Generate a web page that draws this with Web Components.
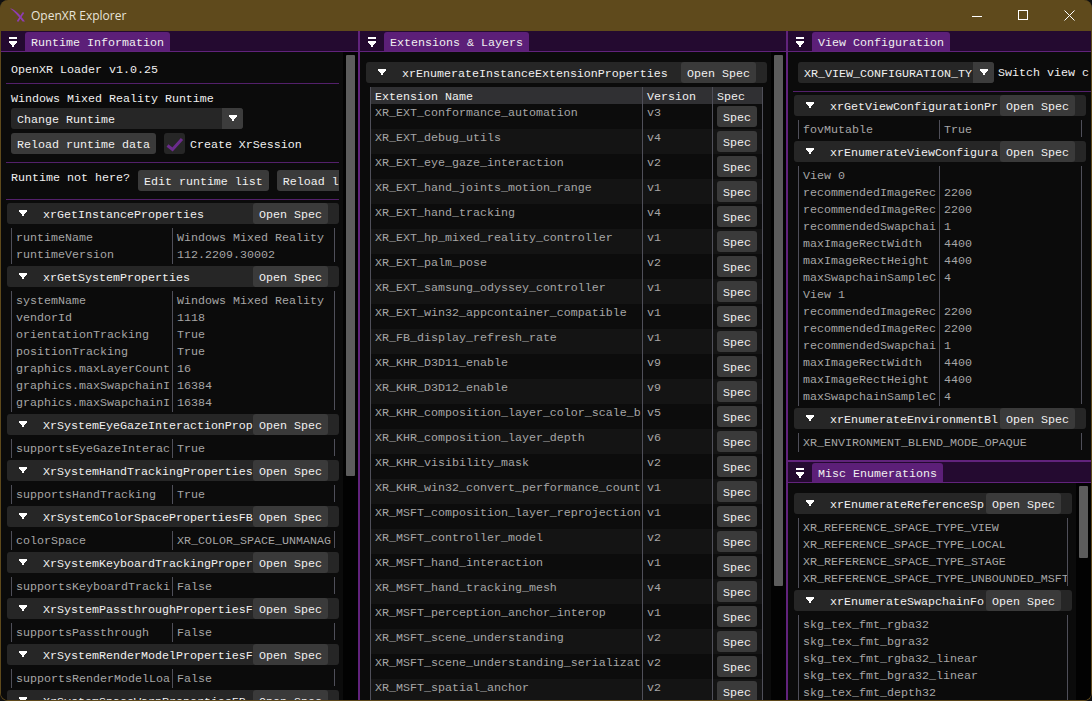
<!DOCTYPE html>
<html>
<head>
<meta charset="utf-8">
<title>OpenXR Explorer</title>
<style>
  html, body { margin: 0; height: 100%; background: #111; overflow: hidden; }
  body { font: 11.667px/17px "Liberation Mono", monospace; color: #f0f0f0; }
</style>
</head>
<body>
<xr-window>
  <xr-panel slot="left" label="Runtime Information" thumb="421" style="height:100%">
    <xr-text style="margin-top:9px">OpenXR Loader v1.0.25</xr-text>
    <xr-sep style="margin-top:5px"></xr-sep>
    <xr-text style="margin-top:6px">Windows Mixed Reality Runtime</xr-text>
    <xr-combo width="232" style="margin:1px 0 0 5px">Change Runtime</xr-combo>
    <xr-line style="margin-top:4px">
      <xr-button>Reload runtime data</xr-button>
      <xr-check>Create XrSession</xr-check>
    </xr-line>
    <xr-sep style="margin-top:8px"></xr-sep>
    <xr-line style="margin-top:7px">
      <span style="line-height:16px;flex:none">Runtime not here?</span>
      <xr-button>Edit runtime list</xr-button>
      <xr-button style="width:88px">Reload l</xr-button>
    </xr-line>
    <xr-sep style="margin:8px 0 3px"></xr-sep>

    <div style="--c1:161px;--c2:162px">
      <xr-section label="xrGetInstanceProperties">
        <xr-row name="runtimeName" value="Windows Mixed Reality"></xr-row>
        <xr-row name="runtimeVersion" value="112.2209.30002"></xr-row>
      </xr-section>
      <xr-section label="xrGetSystemProperties">
        <xr-row name="systemName" value="Windows Mixed Reality"></xr-row>
        <xr-row name="vendorId" value="1118"></xr-row>
        <xr-row name="orientationTracking" value="True"></xr-row>
        <xr-row name="positionTracking" value="True"></xr-row>
        <xr-row name="graphics.maxLayerCount" value="16"></xr-row>
        <xr-row name="graphics.maxSwapchainI" value="16384"></xr-row>
        <xr-row name="graphics.maxSwapchainI" value="16384"></xr-row>
      </xr-section>
      <xr-section label="XrSystemEyeGazeInteractionProp">
        <xr-row name="supportsEyeGazeInterac" value="True"></xr-row>
      </xr-section>
      <xr-section label="XrSystemHandTrackingProperties">
        <xr-row name="supportsHandTracking" value="True"></xr-row>
      </xr-section>
      <xr-section label="XrSystemColorSpacePropertiesFB">
        <xr-row name="colorSpace" value="XR_COLOR_SPACE_UNMANAG"></xr-row>
      </xr-section>
      <xr-section label="XrSystemKeyboardTrackingProper">
        <xr-row name="supportsKeyboardTracki" value="False"></xr-row>
      </xr-section>
      <xr-section label="XrSystemPassthroughPropertiesF">
        <xr-row name="supportsPassthrough" value="False"></xr-row>
      </xr-section>
      <xr-section label="XrSystemRenderModelPropertiesF">
        <xr-row name="supportsRenderModelLoa" value="False"></xr-row>
      </xr-section>
      <xr-section label="XrSystemSpaceWarpPropertiesFB"></xr-section>
    </div>
  </xr-panel>

  <xr-panel slot="middle" label="Extensions &amp; Layers" thumb="531" style="height:100%">
    <div style="height:10px"></div>
    <xr-section label="xrEnumerateInstanceExtensionProperties">
      <xr-ext head name="Extension Name" ver="Version"></xr-ext>
      <xr-ext name="XR_EXT_conformance_automation" ver="v3"></xr-ext>
      <xr-ext name="XR_EXT_debug_utils" ver="v4"></xr-ext>
      <xr-ext name="XR_EXT_eye_gaze_interaction" ver="v2"></xr-ext>
      <xr-ext name="XR_EXT_hand_joints_motion_range" ver="v1"></xr-ext>
      <xr-ext name="XR_EXT_hand_tracking" ver="v4"></xr-ext>
      <xr-ext name="XR_EXT_hp_mixed_reality_controller" ver="v1"></xr-ext>
      <xr-ext name="XR_EXT_palm_pose" ver="v2"></xr-ext>
      <xr-ext name="XR_EXT_samsung_odyssey_controller" ver="v1"></xr-ext>
      <xr-ext name="XR_EXT_win32_appcontainer_compatible" ver="v1"></xr-ext>
      <xr-ext name="XR_FB_display_refresh_rate" ver="v1"></xr-ext>
      <xr-ext name="XR_KHR_D3D11_enable" ver="v9"></xr-ext>
      <xr-ext name="XR_KHR_D3D12_enable" ver="v9"></xr-ext>
      <xr-ext name="XR_KHR_composition_layer_color_scale_b" ver="v5"></xr-ext>
      <xr-ext name="XR_KHR_composition_layer_depth" ver="v6"></xr-ext>
      <xr-ext name="XR_KHR_visibility_mask" ver="v2"></xr-ext>
      <xr-ext name="XR_KHR_win32_convert_performance_count" ver="v1"></xr-ext>
      <xr-ext name="XR_MSFT_composition_layer_reprojection" ver="v1"></xr-ext>
      <xr-ext name="XR_MSFT_controller_model" ver="v2"></xr-ext>
      <xr-ext name="XR_MSFT_hand_interaction" ver="v1"></xr-ext>
      <xr-ext name="XR_MSFT_hand_tracking_mesh" ver="v4"></xr-ext>
      <xr-ext name="XR_MSFT_perception_anchor_interop" ver="v1"></xr-ext>
      <xr-ext name="XR_MSFT_scene_understanding" ver="v2"></xr-ext>
      <xr-ext name="XR_MSFT_scene_understanding_serializat" ver="v2"></xr-ext>
      <xr-ext name="XR_MSFT_spatial_anchor" ver="v2"></xr-ext>
    </xr-section>
  </xr-panel>

  <xr-panel slot="right-top" label="View Configuration" style="height:429px;--section-end:5px;--c1:141px;--c2:142px">
    <xr-line style="margin-top:10px;gap:4px">
      <xr-combo width="196" style="flex:none">XR_VIEW_CONFIGURATION_TY</xr-combo>
      <span style="flex:none;height:21px;line-height:23px">Switch view c</span>
    </xr-line>
    <xr-sep style="margin:8px 0 3px"></xr-sep>
    <xr-section label="xrGetViewConfigurationPr">
      <xr-row name="fovMutable" value="True"></xr-row>
    </xr-section>
    <xr-section label="xrEnumerateViewConfigura">
      <xr-row name="View 0"></xr-row>
      <xr-row name="recommendedImageRec" value="2200"></xr-row>
      <xr-row name="recommendedImageRec" value="2200"></xr-row>
      <xr-row name="recommendedSwapchai" value="1"></xr-row>
      <xr-row name="maxImageRectWidth" value="4400"></xr-row>
      <xr-row name="maxImageRectHeight" value="4400"></xr-row>
      <xr-row name="maxSwapchainSampleC" value="4"></xr-row>
      <xr-row name="View 1"></xr-row>
      <xr-row name="recommendedImageRec" value="2200"></xr-row>
      <xr-row name="recommendedImageRec" value="2200"></xr-row>
      <xr-row name="recommendedSwapchai" value="1"></xr-row>
      <xr-row name="maxImageRectWidth" value="4400"></xr-row>
      <xr-row name="maxImageRectHeight" value="4400"></xr-row>
      <xr-row name="maxSwapchainSampleC" value="4"></xr-row>
    </xr-section>
    <xr-section label="xrEnumerateEnvironmentBl">
      <xr-row wide name="XR_ENVIRONMENT_BLEND_MODE_OPAQUE" style="--c1:283px"></xr-row>
    </xr-section>
  </xr-panel>

  <xr-panel slot="right-bottom" label="Misc Enumerations" thumb="72" style="height:238px;--c1:269px">
    <div style="height:10px"></div>
    <xr-section label="xrEnumerateReferenceSp">
      <xr-row wide name="XR_REFERENCE_SPACE_TYPE_VIEW"></xr-row>
      <xr-row wide name="XR_REFERENCE_SPACE_TYPE_LOCAL"></xr-row>
      <xr-row wide name="XR_REFERENCE_SPACE_TYPE_STAGE"></xr-row>
      <xr-row wide name="XR_REFERENCE_SPACE_TYPE_UNBOUNDED_MSFT"></xr-row>
    </xr-section>
    <xr-section label="xrEnumerateSwapchainFo">
      <xr-row wide name="skg_tex_fmt_rgba32"></xr-row>
      <xr-row wide name="skg_tex_fmt_bgra32"></xr-row>
      <xr-row wide name="skg_tex_fmt_rgba32_linear"></xr-row>
      <xr-row wide name="skg_tex_fmt_bgra32_linear"></xr-row>
      <xr-row wide name="skg_tex_fmt_depth32"></xr-row>
    </xr-section>
  </xr-panel>
</xr-window>

<script>
const arrow = `<svg width="8" height="7" viewBox="0 0 8 7" shape-rendering="crispEdges" fill="#fff"><path d="M0 0H8V2H7V3H6V4H5V6H3V4H2V3H1V2H0Z"/></svg>`;

// Every element fills its shadow root the same way
class XrBase extends HTMLElement {
  render(html) {
    this.attachShadow({ mode: "open" }).innerHTML = html.trim();
  }
}

// Outer frame: title bar and the docked panels
class XrWindow extends XrBase {
  constructor() {
    super();
    this.render(`
      <style>
        :host { display: flex; flex-direction: column; width: 1092px; height: 701px; box-sizing: border-box;
          background: #5f4a1c; border: 1px solid #5f4a1c; border-top: 0; border-radius: 8px; overflow: hidden; }
        .title { display: flex; align-items: center; flex: none; height: 31px; color: #e8e4da;
          font: 12px/31px "Open Sans", "Noto Sans", sans-serif; margin-right: -1px; }
        .logo { margin: 0 5px 0 9px; }
        .ctl { display: flex; margin-left: auto; }
        .ctl div { width: 46px; height: 31px; display: flex; align-items: center; justify-content: center; }
        .dock { display: flex; flex: 1; min-height: 0; background: #000; }
        .div { flex: none; width: 2px; background: #61237c; }
        .left { flex: none; width: 357px; min-width: 0; }
        .mid { flex: none; width: 426px; min-width: 0; }
        .right { flex: 1; min-width: 0; display: flex; flex-direction: column; }
        .hdiv { flex: none; height: 2px; background: #61237c; }
      </style>
      <div class="title">
        <svg class="logo" width="16" height="15" viewBox="0 0 16 15">
          <path fill="#8f3db0" d="M0 .3C5 1.5 9.5 6 15 13.5H12.6C8.5 8.5 4.5 3.5 0 .3Z"/>
          <path fill="none" stroke="#8f3db0" stroke-width="1.7" d="M13.5 4.5L7.5 13.5"/>
        </svg>
        <span>OpenXR Explorer</span>
        <div class="ctl">
          <div><svg width="10" height="10" shape-rendering="crispEdges" stroke="#fff"><path d="M0 5.5H10"/></svg></div>
          <div><svg width="11" height="11" stroke="#fff" fill="none" shape-rendering="crispEdges"><rect x=".5" y=".5" width="9" height="9"/></svg></div>
          <div><svg width="11" height="11" stroke="#fff" fill="none"><path d="M.5.5L10.5 10.5M10.5.5L.5 10.5"/></svg></div>
        </div>
      </div>
      <div class="dock">
        <div class="left"><slot name="left"></slot></div>
        <div class="div"></div>
        <div class="mid"><slot name="middle"></slot></div>
        <div class="div"></div>
        <div class="right">
          <slot name="right-top"></slot>
          <div class="hdiv"></div>
          <slot name="right-bottom"></slot>
        </div>
      </div>`);
  }
}

// Dock panel: tab bar, clipped content, optional scrollbar
class XrPanel extends XrBase {
  constructor() {
    super();
    const thumb = this.getAttribute("thumb");
    this.render(`
      <style>
        :host { display: flex; flex-direction: column; overflow: hidden; }
        .bar { display: flex; flex: none; height: 20px; background: #240a30; border-bottom: 1px solid #61237c; }
        .menu { flex: none; width: 24px; display: flex; flex-direction: column; align-items: center; padding-top: 6px; box-sizing: border-box; }
        .menu i { display: block; width: 8px; height: 2px; background: #fff; margin-bottom: 2px; }
        .tab { margin-top: 1px; padding: 0 6px; height: 19px; line-height: 22px; background: #5c1f78; border-radius: 3px 3px 0 0; white-space: pre; }
        .body { display: flex; flex: 1; min-height: 0; background: #0b0b0b; }
        .content { flex: 1; min-width: 0; padding-left: 5px; overflow: hidden; margin-right: 4px; display: flex; flex-direction: column; }
        .track { flex: none; width: 15px; background: #020202; padding: 3px 3px 0; box-sizing: border-box; }
        .thumb { width: 9px; background: #5c5c5c; border-radius: 1px; }
        ::slotted(*) { flex: none; }
      </style>
      <div class="bar">
        <div class="menu"><i></i>${arrow}</div>
        <div class="tab"></div>
      </div>
      <div class="body">
        <div class="content"${thumb ? "" : ' style="margin-right:0"'}><slot></slot></div>
        ${thumb ? `<div class="track"><div class="thumb" style="height:${thumb}px"></div></div>` : ""}
      </div>`);
    this.shadowRoot.querySelector(".tab").textContent = this.getAttribute("label");
  }
}

class XrText extends XrBase {
  constructor() {
    super();
    this.render(`<style>:host { display: block; padding-left: 5px; height: 17px; line-height: 19px; white-space: pre; }</style><slot></slot>`);
  }
}

class XrSep extends XrBase {
  constructor() {
    super();
    this.render(`<style>:host { display: block; height: 1px; background: #53206b; }</style>`);
  }
}

// Horizontal group of widgets
class XrLine extends XrBase {
  constructor() {
    super();
    this.render(`<style>:host { display: flex; gap: 8px; padding-left: 5px; min-width: 0; }</style><slot></slot>`);
  }
}

class XrButton extends XrBase {
  constructor() {
    super();
    this.render(`
      <style>
        :host { display: block; flex: none; height: 21px; padding: 0 6px; line-height: 24px; background: #3a3a3a;
          border-radius: 3px; white-space: pre; color: #f0f0f0; }
      </style><slot></slot>`);
  }
}

class XrCombo extends XrBase {
  constructor() {
    super();
    this.render(`
      <style>
        :host { display: flex; height: 21px; line-height: 24px; background: #262626; border-radius: 3px; overflow: hidden; }
        .val { flex: 1; min-width: 0; padding-left: 6px; overflow: hidden; white-space: pre; }
        .btn { flex: none; width: 21px; background: #3c3c3c; display: flex; align-items: center; justify-content: center; }
      </style>
      <div class="val"><slot></slot></div>
      <div class="btn">${arrow}</div>`);
    this.style.width = this.getAttribute("width") + "px";
  }
}

class XrCheck extends XrBase {
  constructor() {
    super();
    this.render(`
      <style>
        :host { display: flex; flex: none; gap: 5px; height: 21px; line-height: 24px; }
        .box { width: 21px; height: 21px; background: #262626; border-radius: 3px; }
        svg { display: block; }
      </style>
      <div class="box"><svg width="21" height="21" fill="none" stroke="#6b2c8c" stroke-width="3"><path d="M3.5 12.5L8.5 16.5L18 6"/></svg></div>
      <span><slot></slot></span>`);
  }
}

// Collapsing header with the spec button, rows go in the slot
class XrSection extends XrBase {
  constructor() {
    super();
    this.render(`
      <style>
        :host { display: block; margin: 0 var(--section-end, 0) 0 1px; }
        .head { display: flex; align-items: center; height: 21px; background: #262626; border-radius: 3px; padding-right: 11px; }
        .tri { flex: none; width: 36px; display: flex; padding-left: 12px; box-sizing: border-box; }
        .name { flex: 1; min-width: 0; overflow: hidden; white-space: pre; color: #f0f0f0; padding-top: 4px; }
        .rows { margin: 4px 0 4px 4px; }
      </style>
      <div class="head">
        <div class="tri">${arrow}</div>
        <div class="name"></div>
        <xr-button>Open Spec</xr-button>
      </div>
      <div class="rows"><slot></slot></div>`);
    this.shadowRoot.querySelector(".name").textContent = this.getAttribute("label");
  }
}

// Two column key/value row, or a single column one with the wide attribute
class XrRow extends XrBase {
  constructor() {
    super();
    this.render(`
      <style>
        :host { display: grid; grid-template-columns: var(--c1) var(--c2); width: max-content; height: 17px; line-height: 17px;
          border-right: 1px solid #4f4f59; color: #a6a6a6; }
        :host([wide]) { grid-template-columns: var(--c1); }
        div { box-sizing: border-box; border-left: 1px solid #4f4f59; padding: 2px 0 0 4px; overflow-x: clip; white-space: pre; min-width: 0; }
      </style>
      <div class="k"></div>${this.hasAttribute("wide") ? "" : '<div class="v"></div>'}`);
    this.shadowRoot.querySelector(".k").textContent = this.getAttribute("name");
    const v = this.shadowRoot.querySelector(".v");
    if (v) v.textContent = this.getAttribute("value") || "";
  }
}

// Row of the extension table, striped with nth-of-type
class XrExt extends XrBase {
  constructor() {
    super();
    const head = this.hasAttribute("head");
    this.render(`
      <style>
        :host { display: grid; grid-template-columns: 272px 70px 50px; width: max-content; height: 25px; line-height: 17px;
          border-right: 1px solid #4f4f59; color: #a6a6a6; background: #141414; }
        :host(:nth-of-type(even)) { background: #0c0c0c; }
        :host([head]) { height: 17px; background: #303033; color: #f0f0f0; }
        .c { box-sizing: border-box; border-left: 1px solid #4f4f59; padding: 1px 0 0 4px; overflow-x: clip; white-space: pre; min-width: 0; }
        :host([head]) .c { padding-top: 2px; }
        .c.s { padding: 2px 0 0 4px; }
        xr-button { display: block; width: 28px; }
      </style>
      <div class="c n"></div><div class="c r"></div>
      <div class="c s">${head ? "Spec" : "<xr-button>Spec</xr-button>"}</div>`);
    this.shadowRoot.querySelector(".n").textContent = this.getAttribute("name");
    this.shadowRoot.querySelector(".r").textContent = this.getAttribute("ver");
  }
}

customElements.define("xr-button", XrButton);
customElements.define("xr-window", XrWindow);
customElements.define("xr-panel", XrPanel);
customElements.define("xr-text", XrText);
customElements.define("xr-sep", XrSep);
customElements.define("xr-line", XrLine);
customElements.define("xr-combo", XrCombo);
customElements.define("xr-check", XrCheck);
customElements.define("xr-section", XrSection);
customElements.define("xr-row", XrRow);
customElements.define("xr-ext", XrExt);
</script>
</body>
</html>
